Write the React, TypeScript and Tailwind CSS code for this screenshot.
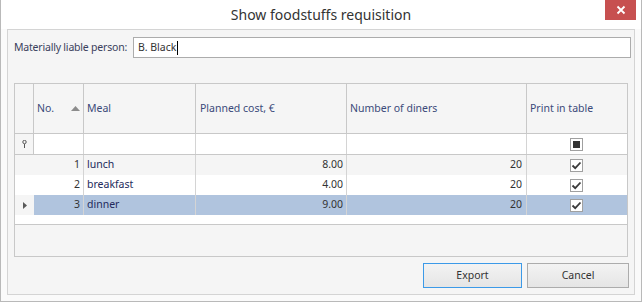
import React from "react";

const font = { fontFamily: '"Noto Sans", "Open Sans", sans-serif' };

function CheckBox({ state }: { state: "checked" | "indeterminate" }) {
  return (
    <div className="w-[13px] h-[13px] border border-[#a0a0a0] bg-white flex items-center justify-center">
      {state === "indeterminate" ? (
        <div className="w-[7px] h-[7px] bg-[#333333]" />
      ) : (
        <svg width="11" height="11" viewBox="0 0 11 11">
          <path d="M1.5 5.5 L4.2 8.2 L9.5 2.5" fill="none" stroke="#3a3a3a" strokeWidth="1.8" />
        </svg>
      )}
    </div>
  );
}

const cols = ["w-[19px]", "w-[50px]", "w-[112px]", "w-[151px]", "w-[180px]", "flex-1"];

type Row = { no: number; meal: string; cost: string; diners: number; bg: string; ind: string; sel?: boolean };

const rows: Row[] = [
  { no: 1, meal: "lunch", cost: "8.00", diners: 20, bg: "bg-[#f5f5f5]", ind: "bg-[#f5f5f5]" },
  { no: 2, meal: "breakfast", cost: "4.00", diners: 20, bg: "bg-white", ind: "bg-white" },
  { no: 3, meal: "dinner", cost: "9.00", diners: 20, bg: "bg-[#b0c4de]", ind: "bg-[#f5f5f5]", sel: true },
];

export default function App() {
  return (
    <div
      className="w-[642px] h-[302px] bg-[#fafafa] border-l border-r border-b border-[#b9b9b9] flex flex-col text-[10.5px] text-[#3a3f5c] overflow-hidden"
      style={font}
    >
      {/* Title bar */}
      <div className="relative h-[29px] shrink-0 flex items-center justify-center bg-white">
        <span className="text-[14px] text-[#333333] leading-none mt-[1px]">Show foodstuffs requisition</span>
        <div className="absolute right-[5px] top-0 w-[31px] h-[20px] bg-[#c75050] flex items-center justify-center">
          <svg width="10" height="10" viewBox="0 0 10 10">
            <path d="M1.5 1.5 L8.5 8.5 M8.5 1.5 L1.5 8.5" stroke="white" strokeWidth="1.8" />
          </svg>
        </div>
      </div>

      {/* Panel */}
      <div className="mx-[6px] h-[266px] border border-[#d4d4d4] bg-[#f5f5f5] flex flex-col px-[6px] pt-[7px]">
        <div className="flex items-center h-[21px]">
          <span className="w-[119px] shrink-0 whitespace-nowrap tracking-[-0.2px]">Materially liable person:</span>
          <div className="flex-1 h-[21px] bg-white border border-[#acacac] flex items-center pl-[4px] text-[#333333] mr-[-3px]">
            <span>B. Black</span>
            <span className="w-px h-[14px] bg-black ml-[1px]" />
          </div>
        </div>

        {/* Grid */}
        <div className="mt-[25px] h-[174px] w-[614px] border border-[#c8c8c8] bg-white flex flex-col">
          {/* Header */}
          <div className="flex h-[50px] bg-[#f5f5f5] border-b border-[#c8c8c8] text-[#3b4a7a]">
            <div className={`${cols[0]} border-r border-[#c8c8c8]`} />
            <div className={`${cols[1]} border-r border-[#c8c8c8] flex items-center pl-[3px] pr-[3px] justify-between`}>
              <span>No.</span>
              <svg width="9" height="5" viewBox="0 0 9 5">
                <path d="M0 5 L4.5 0 L9 5 Z" fill="#8c8c8c" />
              </svg>
            </div>
            <div className={`${cols[2]} border-r border-[#c8c8c8] flex items-center pl-[3px]`}>Meal</div>
            <div className={`${cols[3]} border-r border-[#c8c8c8] flex items-center pl-[4px]`}>Planned cost, €</div>
            <div className={`${cols[4]} border-r border-[#c8c8c8] flex items-center pl-[3px]`}>Number of diners</div>
            <div className={`${cols[5]} flex items-center pl-[3px]`}>Print in table</div>
          </div>

          {/* Filter row */}
          <div className="flex h-[21px] bg-white border-b border-[#c8c8c8]">
            <div className={`${cols[0]} border-r border-[#c8c8c8] bg-[#f5f5f5] flex items-center justify-center`}>
              <svg width="5" height="8" viewBox="0 0 5 8">
                <circle cx="2.5" cy="2" r="1.7" fill="none" stroke="#555" strokeWidth="1" />
                <path d="M2.5 4 L2.5 8" stroke="#555" strokeWidth="1" />
              </svg>
            </div>
            <div className={`${cols[1]} border-r border-[#d4d4d4]`} />
            <div className={`${cols[2]} border-r border-[#d4d4d4]`} />
            <div className={`${cols[3]} border-r border-[#d4d4d4]`} />
            <div className={`${cols[4]} border-r border-[#d4d4d4]`} />
            <div className={`${cols[5]} flex items-center justify-center pr-[1px]`}>
              <CheckBox state="indeterminate" />
            </div>
          </div>

          {/* Data rows */}
          {rows.map((r) => (
            <div key={r.no} className={`flex h-[20px] ${r.bg}`}>
              <div className={`${cols[0]} ${r.ind} flex items-center justify-center`}>
                {r.sel && (
                  <svg width="4" height="7" viewBox="0 0 4 7">
                    <path d="M0 0 L4 3.5 L0 7 Z" fill="#5a5a5a" />
                  </svg>
                )}
              </div>
              <div className={`${cols[1]} border-r border-[#d4d4d4] flex items-center justify-end pr-[3px] text-[#333333]`}>{r.no}</div>
              <div className={`${cols[2]} border-r border-[#d4d4d4] flex items-center pl-[3px] text-[#232a5c]`}>{r.meal}</div>
              <div className={`${cols[3]} border-r border-[#d4d4d4] flex items-center justify-end pr-[3px] text-[#333333]`}>{r.cost}</div>
              <div className={`${cols[4]} border-r border-[#d4d4d4] flex items-center justify-end pr-[4px] text-[#333333]`}>{r.diners}</div>
              <div className={`${cols[5]} flex items-center justify-center pr-[1px]`}>
                <CheckBox state="checked" />
              </div>
            </div>
          ))}

          <div className="h-[10px] bg-white border-b border-[#c8c8c8]" />
          <div className="flex-1 bg-[#f5f5f5]" />
        </div>

        {/* Buttons */}
        <div className="flex justify-end gap-[5px] mt-[6px] mr-[-1px]">
          <button className="w-[99px] h-[25px] border border-[#3c9ae8] bg-gradient-to-b from-[#f3f3f3] to-[#e5e5e5] text-[#333333]">
            Export
          </button>
          <button className="w-[102px] h-[25px] border border-[#acacac] bg-gradient-to-b from-[#f3f3f3] to-[#e5e5e5] text-[#333333]">
            Cancel
          </button>
        </div>
      </div>
    </div>
  );
}
